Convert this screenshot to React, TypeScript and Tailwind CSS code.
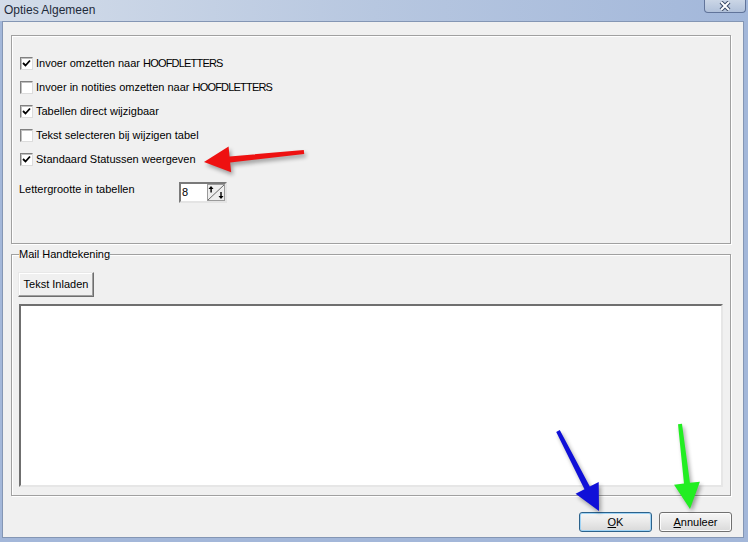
import React from "react"

const font = { fontFamily: '"Liberation Sans", Arial, sans-serif' }

const Check = ({ checked }: { checked?: boolean }) => (
  <span className="relative w-[13px] h-[13px] shrink-0 bg-white border border-t-[#808080] border-l-[#808080] border-b-[#dcdcdc] border-r-[#dcdcdc] shadow-[inset_1px_1px_0_#c0c0c0]">
    {checked && (
      <svg className="absolute left-[1px] top-[1px]" width="9" height="9" viewBox="0 0 9 9">
        <path d="M1 4 L3.5 6.5 L8 1.5" fill="none" stroke="#000" strokeWidth="1.8" />
      </svg>
    )}
  </span>
)

const Row = ({ label, caps, checked }: { label: string; caps?: string; checked?: boolean }) => (
  <div className="h-[24px] flex items-center gap-[3px]">
    <Check checked={checked} />
    <span className="text-[11px] text-black leading-[13px]">
      {label}
      {caps && <span className="tracking-[-0.8px]">{caps}</span>}
    </span>
  </div>
)

// arrow polygon from tail to tip, shaft width w, head length h, head half-width hw
const arrow = (x1: number, y1: number, x2: number, y2: number, w = 6, h = 26, hw = 13) => {
  const dx = x2 - x1
  const dy = y2 - y1
  const len = Math.hypot(dx, dy)
  const ux = dx / len
  const uy = dy / len
  const px = -uy
  const py = ux
  const bx = x2 - ux * h
  const by = y2 - uy * h
  const pts = [
    [x1 + px * (w / 2 - 1), y1 + py * (w / 2 - 1)],
    [bx + px * (w / 2), by + py * (w / 2)],
    [bx + px * hw, by + py * hw],
    [x2, y2],
    [bx - px * hw, by - py * hw],
    [bx - px * (w / 2), by - py * (w / 2)],
    [x1 - px * (w / 2 - 1), y1 - py * (w / 2 - 1)],
  ]
  return pts.map((p) => p.join(",")).join(" ")
}

const Arrows = () => {
  const list: [number, number, number, number, string][] = [
    [304, 152, 204, 162, "#ee1111"],
    [558, 431, 599, 511, "#1010d8"],
    [680, 424, 690, 509, "#22ee22"],
  ]
  return (
    <svg className="absolute left-0 top-0 pointer-events-none" width="748" height="542">
      <defs>
        <filter id="sh" x="-20%" y="-20%" width="140%" height="140%">
          <feGaussianBlur stdDeviation="2" />
        </filter>
      </defs>
      {list.map(([a, b, c, d, col], i) => (
        <g key={i}>
          <polygon points={arrow(a + 2, b + 3, c + 2, d + 3)} fill="#000" opacity="0.35" filter="url(#sh)" />
          <polygon points={arrow(a, b, c, d)} fill={col} />
        </g>
      ))}
    </svg>
  )
}

const Spinner = () => (
  <div className="w-[48px] h-[21px] flex bg-white border-2 border-t-[#7a7a7a] border-l-[#7a7a7a] border-b-[#e4e4e4] border-r-[#e4e4e4]">
    <span className="flex-1 pl-[1px] text-[11px] leading-[17px] text-black">8</span>
    <svg width="18" height="17" viewBox="0 0 18 17" className="bg-[#eeeeee]">
      <rect x="0.5" y="0.5" width="17" height="16" fill="none" stroke="#9a9a9a" />
      <line x1="1" y1="16" x2="17" y2="1" stroke="#6a6a6a" />
      <path d="M4 2 L1.5 5 L6.5 5 Z" fill="#000" />
      <rect x="3.4" y="4.5" width="1.4" height="4" fill="#000" />
      <path d="M14 15 L11.5 12 L16.5 12 Z" fill="#000" />
      <rect x="13.3" y="8" width="1.4" height="4.5" fill="#000" />
    </svg>
  </div>
)

const VistaButton = ({ label, first, focus }: { label: string; first: string; focus?: boolean }) => (
  <button
    className={
      "w-[73px] h-[20px] rounded-[3px] border text-[11px] leading-none text-black bg-gradient-to-b from-[#f6f6f6] via-[#e9e9e9] to-[#d9d9d9] " +
      (focus ? "border-[#2c628b] shadow-[inset_0_0_0_1px_#9fd3f5]" : "border-[#707070] shadow-[inset_0_0_0_1px_#fcfcfc]")
    }
  >
    <span className="underline">{first}</span>
    {label}
  </button>
)

export default function App() {
  return (
    <div style={font} className="relative w-[748px] h-[542px] flex flex-col bg-[#a3b7d9] overflow-hidden">
      <div className="relative h-[21px] shrink-0 bg-gradient-to-r from-[#d3dce9] via-[#b7c7e0] to-[#a2b7da]">
        <span className="absolute left-[4px] top-[3px] text-[12px] leading-[14px] text-[#1e2a3a]">Opties Algemeen</span>
        <div className="absolute left-[704px] top-0 w-[42px] h-[13px] rounded-b-[4px] border border-t-0 border-[#61749a] bg-gradient-to-b from-[#cbd6e6] to-[#b1c1da] flex items-center justify-center">
          <svg width="12" height="10" viewBox="0 0 12 10">
            <path d="M2 1 L10 9 M10 1 L2 9" stroke="#3a4a66" strokeWidth="4" />
            <path d="M2 1 L10 9 M10 1 L2 9" stroke="#ffffff" strokeWidth="2" />
          </svg>
        </div>
      </div>

      <div className="ml-[2px] mr-[4px] mb-[4px] flex-1 border border-[#8496b4] bg-[#f0f0f0] flex flex-col pl-[8px] pt-[13px]">
        <div className="w-[720px] h-[209px] border border-[#a0a0a0] shadow-[inset_1px_1px_0_#ffffff,1px_1px_0_#ffffff] pl-[8px] pt-[15px] flex flex-col">
          <Row checked label="Invoer omzetten naar " caps="HOOFDLETTERS" />
          <Row label="Invoer in notities omzetten naar " caps="HOOFDLETTERS" />
          <Row checked label="Tabellen direct wijzigbaar" />
          <Row label="Tekst selecteren bij wijzigen tabel" />
          <Row checked label="Standaard Statussen weergeven" />
          <div className="mt-[11px] flex items-start">
            <span className="w-[160px] -ml-[1px] pt-[1px] text-[11px] leading-[13px] text-black">Lettergrootte in tabellen</span>
            <Spinner />
          </div>
        </div>

        <fieldset className="mt-[4px] w-[720px] h-[248px] border border-[#a0a0a0] shadow-[inset_1px_1px_0_#ffffff,1px_1px_0_#ffffff] pl-[6px]">
          <legend className="ml-[1px] text-[11px] leading-[13px] text-black">Mail Handtekening</legend>
          <button className="mt-[11px] w-[76px] h-[25px] text-[11px] text-black bg-[#f0f0f0] border border-t-[#e8e8e8] border-l-[#e8e8e8] border-b-[#6e6e6e] border-r-[#6e6e6e] shadow-[inset_-1px_-1px_0_#a0a0a0,inset_1px_1px_0_#ffffff]">
            Tekst Inladen
          </button>
          <div className="mt-[7px] ml-[1px] w-[704px] h-[183px] bg-white border-2 border-t-[#6f6f6f] border-l-[#6f6f6f] border-b-[#e6e6e6] border-r-[#e6e6e6]" />
        </fieldset>

        <div className="mt-[16px] w-[721px] flex justify-end gap-[7px]">
          <VistaButton first="O" label="K" focus />
          <VistaButton first="A" label="nnuleer" />
        </div>
      </div>

      <Arrows />
    </div>
  )
}
